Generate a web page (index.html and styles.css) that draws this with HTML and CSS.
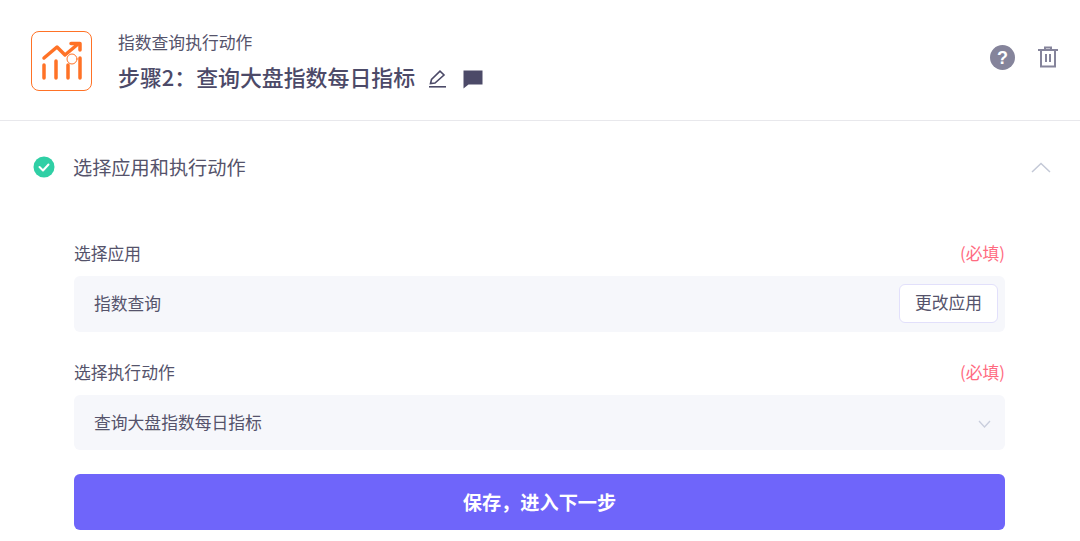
FILE: index.html

```html
<!DOCTYPE html>
<html lang="zh-CN">
<head>
    <meta charset="UTF-8">
    <title>指数查询执行动作</title>
    <link rel="stylesheet" href="styles.css">
</head>
<body>
    <div class="header">
        <div class="logo">
            <svg width="59" height="58" viewBox="32 32 59 58" fill="none" stroke="#ff7226" stroke-linecap="round" stroke-linejoin="round">
                <path d="M44 58 L57 47 L65 55 L78 44" stroke-width="3.500"/>
                <path d="M71 43.500 H80 V50" stroke-width="3.500"/>
                <path d="M44 65 V78 M56 61 V78 M68 65 V78 M80 58 V78" stroke-width="3.500"/>
                <circle cx="72" cy="59" r="5" fill="#fff" fill-opacity="0.6" stroke-width="1"/>
            </svg>
        </div>
        <div class="titles">
            <div class="subtitle">指数查询执行动作</div>
            <div class="title-row">
                <span class="title">步骤2：查询大盘指数每日指标</span>
                <svg class="edit-icon" width="19" height="18" viewBox="0 0 19 18" fill="none" stroke="#4c4a68" stroke-width="1.600">
                    <path d="M2.500 13.500 L3.500 9.500 L12 1.200 L16 5 L7 13 Z"/>
                    <path d="M1 16.800 H18"/>
                </svg>
                <svg class="comment-icon" width="20" height="19" viewBox="0 0 20 19">
                    <path d="M0.500 0.500 H19.500 V14.500 H5.500 L0.500 18.500 Z" fill="#4c4a68"/>
                </svg>
            </div>
        </div>
        <div class="header-actions">
            <svg width="25" height="25" viewBox="0 0 25 25">
                <circle cx="12.500" cy="12.500" r="12.500" fill="#85849b"/>
                <text x="12.500" y="18.500" text-anchor="middle" class="help-mark">?</text>
            </svg>
            <svg width="20" height="22" viewBox="0 0 20 22" fill="none" stroke="#85849b" stroke-width="2">
                <path d="M0 4 H20 M7 4 V1.500 H13 V4"/>
                <path d="M3 4 V20.500 H17 V4"/>
                <path d="M8 8 V16 M12 8 V16"/>
            </svg>
        </div>
    </div>

    <div class="section-head">
        <svg width="22" height="22" viewBox="0 0 22 22">
            <circle cx="11" cy="11" r="10.500" fill="#2fcfa5"/>
            <path d="M6.500 11 L10 14.500 L15.500 8.500" fill="none" stroke="#fff" stroke-width="2" stroke-linecap="round" stroke-linejoin="round"/>
        </svg>
        <span class="section-title">选择应用和执行动作</span>
        <svg class="chevron-up" width="20" height="11" viewBox="0 0 20 11" fill="none" stroke="#c3c8d6" stroke-width="1.500">
            <path d="M1 10 L10 1.500 L19 10"/>
        </svg>
    </div>

    <div class="form">
        <div class="form-group">
            <div class="label-row">
                <span>选择应用</span>
                <span class="required">(必填)</span>
            </div>
            <div class="field">
                <span class="field-text">指数查询</span>
                <button class="change-btn">更改应用</button>
            </div>
        </div>
        <div class="form-group">
            <div class="label-row">
                <span>选择执行动作</span>
                <span class="required">(必填)</span>
            </div>
            <div class="field">
                <span>查询大盘指数每日指标</span>
                <svg class="chevron-down" width="13" height="8" viewBox="0 0 13 8" fill="none" stroke="#c9cedd" stroke-width="1.300">
                    <path d="M1 1 L6.500 7 L12 1"/>
                </svg>
            </div>
        </div>
        <button class="submit-btn">保存，进入下一步</button>
    </div>
</body>
</html>
```

FILE: styles.css

```css
* {
    box-sizing: border-box;
}
body {
    margin: 0;
    height: 541px;
    overflow: hidden;
    background-color: #fff;
    font-family: "Noto Sans CJK SC", "Noto Sans", sans-serif;
    color: #55536b;
}
.header {
    display: flex;
    align-items: center;
    height: 121px;
    padding: 0 22px 0 31px;
    border-bottom: 1px solid #e8e8ec;
}
.logo {
    width: 61px;
    height: 60px;
    margin-top: 2px;
    border: 1px solid #ff7226;
    border-radius: 8px;
    flex-shrink: 0;
}
.logo svg {
    display: block;
}
.titles {
    margin-left: 26px;
    padding-top: 1px;
    flex: 1;
}
.subtitle {
    font-size: 16.8px;
    line-height: 24px;
}
.title-row {
    display: flex;
    align-items: center;
    margin-top: 8px;
}
.title {
    font-size: 21.900px;
    line-height: 30px;
    font-weight: 500;
    color: #4c4a68;
}
.edit-icon {
    margin: 5px 0 0 13px;
}
.comment-icon {
    margin: 5px 0 0 16px;
}
.header-actions {
    display: flex;
    align-items: center;
    gap: 23px;
    margin-top: -6px;
}
.help-mark {
    font-family: "Liberation Sans", sans-serif;
    font-size: 18px;
    font-weight: 700;
    fill: #fff;
}
.section-head {
    display: flex;
    align-items: center;
    height: 92px;
    padding: 0 29px 0 33px;
}
.section-title {
    flex: 1;
    margin-left: 18px;
    font-size: 19.200px;
}
.form {
    padding: 0 75px 0 74px;
    margin-top: 28px;
}
.form-group {
    margin-bottom: 28px;
}
.form-group:last-of-type {
    margin-bottom: 24px;
}
.label-row {
    display: flex;
    justify-content: space-between;
    align-items: center;
    height: 24px;
    margin-bottom: 11px;
    font-size: 16.8px;
}
.required {
    color: #ff6b81;
}
.field {
    display: flex;
    align-items: center;
    justify-content: space-between;
    height: 55.500px;
    padding: 0 7px 0 20px;
    background-color: #f6f7fb;
    border-radius: 6px;
    font-size: 16.8px;
}
.field-text {
    margin-top: -2px;
}
.change-btn {
    width: 99px;
    height: 39px;
    padding: 0 0 3px;
    background-color: #fff;
    border: 1px solid #e2e0fb;
    border-radius: 6px;
    font: inherit;
    color: #55536b;
}
.chevron-down {
    margin-right: 7px;
    margin-top: 4px;
}
.submit-btn {
    display: block;
    width: 100%;
    height: 56px;
    background-color: #6f65fa;
    border: none;
    border-radius: 6px;
    font: inherit;
    font-size: 19.200px;
    font-weight: 700;
    color: #fff;
}
```
